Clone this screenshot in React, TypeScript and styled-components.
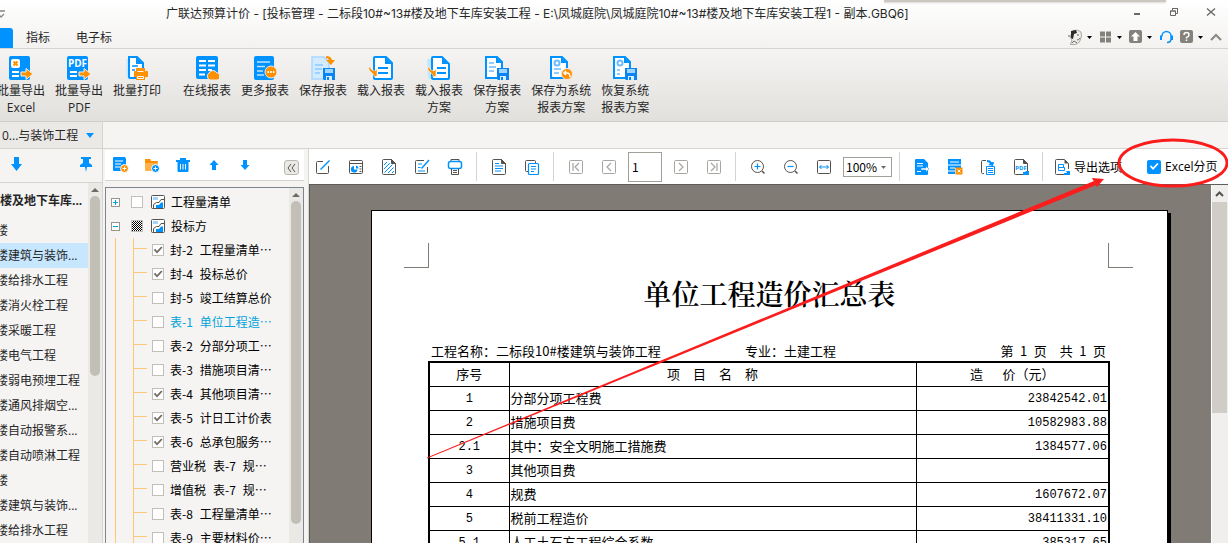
import React from 'react';
import styled, { createGlobalStyle, css } from 'styled-components';

const BLUE = '#0093ff';
const ORANGE = '#ff9000';
const INK = '#55524e';
const MUTED = '#a8a6a1';
const LINE = '#d6d4ce';
const PANEL = '#f5f4f3';

const UI_FONT = '"Open Sans", "Noto Sans CJK SC", sans-serif';
const CJK_FONT = '"Noto Sans CJK SC", sans-serif';

const GlobalStyle = createGlobalStyle`
  *, *::before, *::after { box-sizing: border-box; }
  body { margin: 0; background: ${PANEL}; overflow: hidden; }
  button, input, select { font: inherit; color: inherit; margin: 0; }
  button { background: none; border: 0; padding: 0; cursor: pointer; }
`;

const Window = styled.div`
  position: relative;
  display: flex;
  flex-direction: column;
  height: 100vh;
  overflow: hidden;
  font: 12px/17px ${UI_FONT};
  color: #262626;
`;

/* ---------- title bar and menu tabs ---------- */

const Chrome = styled.header`
  position: relative;
  background: linear-gradient(#ffffff, #f3f2f0);
  border-bottom: 1px solid ${LINE};
`;

const TopShade = styled.div`
  position: absolute;
  top: 0;
  left: 884px;
  right: 62px;
  height: 2px;
  background: #c9c7bf;
  box-shadow: 0 1px 2px #d8d6d0;
`;

const TitleBar = styled.div`
  display: flex;
  align-items: center;
  height: 28px;
`;

const QuickAccess = styled.button`
  display: flex;
  width: 8px;
`;

const Title = styled.h1`
  flex: 1;
  margin: 0 0 0 158px;
  font: 400 12px/26px Inter, ${CJK_FONT};
  white-space: nowrap;
`;

const WindowButtons = styled.div`
  display: flex;
  gap: 25px;
  padding: 0 11px 4px 0;
`;

const GlyphButton = styled.button`
  display: flex;
  align-items: center;
  justify-content: center;
`;

const TabBar = styled.div`
  display: flex;
  align-items: stretch;
  height: 20px;
`;

const ActiveTab = styled.button`
  width: 13px;
  background: ${BLUE};
  border-radius: 0 3px 0 0;
`;

const MenuTab = styled.button`
  padding: 0 13px;
  line-height: 20px;
`;

const Tray = styled.div`
  display: flex;
  align-items: center;
  gap: 7px;
  margin-left: auto;
  padding: 0 6px 2px 0;
`;

const TrayButton = styled.button`
  display: flex;
  align-items: center;
  gap: 4px;
`;

/* ---------- ribbon ---------- */

const Ribbon = styled.div`
  display: flex;
  gap: 12px;
  height: 73px;
  background: linear-gradient(#f5f4f3, #e1e0dc);
  border-bottom: 1px solid #cfcdc8;
`;

const RibbonGroup = styled.div`
  display: flex;
  &:first-child { margin-left: -8px; }
`;

const RibbonButton = styled.button`
  display: flex;
  flex-direction: column;
  align-items: center;
  padding: 7px 5px 0;
  line-height: 17px;
  white-space: pre;
  text-align: center;
  svg { margin-bottom: 2px; flex: none; }
`;

const ProjectStrip = styled.div`
  display: flex;
  height: 27px;
  border-bottom: 1px solid ${LINE};
`;

const ProjectTab = styled.button`
  display: flex;
  align-items: center;
  gap: 8px;
  width: 103px;
  padding-left: 2px;
  background: #ebe9e6;
  border-right: 1px solid ${LINE};
`;

/* ---------- panes ---------- */

const Body = styled.main`
  display: flex;
  flex: 1;
  min-height: 0;
`;

const ProjectPane = styled.section`
  display: flex;
  flex-direction: column;
  flex: none;
  width: 103px;
  border-right: 1px solid ${LINE};
`;

const ProjectTools = styled.div`
  display: flex;
  justify-content: space-between;
  align-items: center;
  height: 34px;
  padding: 0 8px 4px 9px;
  border-bottom: 1px solid ${LINE};
`;

const Scroller = styled.div`
  display: flex;
  flex: 1;
  min-height: 0;
`;

const ProjectList = styled.ul`
  flex: 1;
  min-width: 0;
  margin: 0;
  padding: 0;
  list-style: none;
  overflow: hidden;
`;

const ProjectItem = styled.li<{ $selected?: boolean; $root?: boolean }>`
  height: ${p => (p.$root ? 35 : 25)}px;
  line-height: ${p => (p.$root ? 35 : 25)}px;
  font-weight: ${p => (p.$root ? 700 : 400)};
  text-indent: ${p => (p.$root ? 0 : -4)}px;
  background: ${p => (p.$selected ? '#c7e7ff' : 'transparent')};
  white-space: nowrap;
`;

const ScrollTrack = styled.div`
  flex: none;
  display: flex;
  flex-direction: column;
  align-items: center;
  width: 14px;
  overflow: hidden;
  background: #ebe9e6;
`;

const ScrollArrow = styled.button`
  display: flex;
  justify-content: center;
  align-items: center;
  flex: none;
  height: 13px;
`;

const ScrollThumb = styled.div<{ $size: number }>`
  flex: none;
  width: 10px;
  height: ${p => p.$size}px;
  border-radius: 5px;
  background: #c2bfb7;
`;

const ReportPane = styled.section`
  display: flex;
  flex-direction: column;
  flex: none;
  width: 206px;
  padding: 1px 4px 0 2px;
  border-right: 1px solid ${LINE};
`;

const ReportTools = styled.div`
  display: flex;
  align-items: center;
  height: 31px;
  margin-bottom: 6px;
  padding-right: 5px;
  background: #fff;
  border-bottom: 1px solid ${LINE};
`;

const ToolButton = styled.button<{ $w: number }>`
  display: flex;
  align-items: center;
  justify-content: center;
  flex: none;
  width: ${p => p.$w}px;
  height: 28px;
`;

const CollapseButton = styled.button`
  display: flex;
  align-items: center;
  justify-content: center;
  width: 15px;
  height: 15px;
  margin: 5px 0 0 auto;
  background: #ebe9e6;
  border: 1px solid #b9b7b1;
  border-radius: 3px;
`;

const TreeBox = styled.div`
  display: flex;
  flex: 1;
  min-height: 0;
  border: 1px solid #7f848c;
  border-bottom: 0;
  background: ${PANEL};
`;

const Tree = styled.ul`
  flex: 1;
  min-width: 0;
  margin: 0;
  padding: 2px 0 0;
  list-style: none;
  overflow: hidden;
  font: 12px/24px ${CJK_FONT};
  color: #000;
`;

const TreeRow = styled.li`
  display: flex;
  align-items: center;
  height: 24px;
`;

const Expander = styled.button`
  display: flex;
  flex: none;
  margin: 0 11px 0 5px;
`;

const Trunk = styled.span`
  flex: none;
  align-self: stretch;
  width: 18px;
  margin-left: 9px;
  border-left: 1px solid #ffc878;
`;

const Branch = styled.span`
  flex: none;
  align-self: stretch;
  width: 14px;
  margin-right: 5px;
  border-left: 1px solid #ffc878;
  &::before {
    content: '';
    display: block;
    height: 11px;
    border-bottom: 1px solid #ffc878;
  }
`;

const CheckBox = styled.input.attrs({ type: 'checkbox' })<{ $mixed?: boolean; $accent?: boolean }>`
  appearance: none;
  flex: none;
  display: grid;
  place-content: center;
  width: ${p => (p.$accent ? 14 : 12)}px;
  height: ${p => (p.$accent ? 14 : 12)}px;
  background: #fff;
  border: 1px solid #c2bfb9;
  ${p => p.$mixed && css`
    background: repeating-conic-gradient(#000 0 25%, #fff 0 50%) 0 0 / 2px 2px;
  `}
  ${p => p.$accent && css`
    background: ${BLUE};
    border: 0;
    border-radius: 2px;
  `}
  &:checked::before {
    content: '';
    width: 10px;
    height: 10px;
    background: ${p => (p.$accent ? '#fff' : '#6d6a66')};
    clip-path: polygon(8% 50%, 22% 38%, 40% 60%, 82% 14%, 96% 26%, 40% 86%);
  }
`;

const TreeLabel = styled.label<{ $active?: boolean }>`
  display: flex;
  gap: 7px;
  margin-left: 6px;
  white-space: nowrap;
  color: ${p => (p.$active ? '#00a2dc' : '#000')};
`;

const FolderIcon = styled.svg`
  flex: none;
  margin-left: 8px;
`;

/* ---------- preview ---------- */

const Preview = styled.section`
  display: flex;
  flex-direction: column;
  flex: 1;
  min-width: 0;
`;

const PreviewTools = styled.div`
  display: flex;
  align-items: center;
  gap: 5px;
  flex: none;
  height: 35px;
  background: #fff;
`;

const Separator = styled.span`
  flex: none;
  width: 1px;
  height: 29px;
  margin: 0 3px 0 2px;
  background: ${LINE};
`;

const PageInput = styled.input`
  flex: none;
  width: 34px;
  height: 30px;
  padding: 0 3px;
  border: 1px solid #a3a099;
  background: #fff;
  font-family: ${CJK_FONT};
  color: #000;
`;

const ZoomField = styled.label`
  position: relative;
  display: flex;
  flex: none;
  svg { position: absolute; right: 6px; top: 9px; pointer-events: none; }
`;

const ZoomSelect = styled.select`
  appearance: none;
  width: 49px;
  height: 20px;
  padding: 0 2px;
  border: 1px solid #a3a099;
  border-radius: 0;
  background: #fff;
  font-family: ${CJK_FONT};
  color: #000;
`;

const ExportOptions = styled.button`
  display: flex;
  align-items: center;
  gap: 4px;
  flex: none;
  padding-left: 3px;
  font-family: ${CJK_FONT};
  white-space: nowrap;
  color: #000;
`;

const PagingOption = styled.label`
  display: flex;
  align-items: center;
  gap: 4px;
  flex: none;
  margin-left: 20px;
  white-space: nowrap;
  color: #000;
`;

const Canvas = styled.div`
  display: flex;
  flex: 1;
  min-height: 0;
  background: #807b75;
  border-top: 1px solid #5f5c58;
  border-left: 1px solid #5f5c58;
  overflow: hidden;
`;

const Paper = styled.article`
  flex: 1;
  min-width: 0;
  height: max-content;
  min-height: 640px;
  margin: 25px 43px 0 61px;
  padding-top: 32px;
  background: #fff;
  border: 1px solid #000;
  box-shadow: 3px 3px 0 #000;
  color: #000;
  font: 13px/20px ${CJK_FONT};
`;

const CropMarks = styled.div`
  display: flex;
  justify-content: space-between;
  padding: 0 34px 0 32px;
`;

const CropMark = styled.span<{ $side: 'left' | 'right' }>`
  width: 25px;
  height: 25px;
  border-bottom: 1px solid #807b75;
  border-${p => (p.$side === 'left' ? 'right' : 'left')}: 1px solid #807b75;
`;

const PaperTitle = styled.h2`
  margin: 7px 0 30px;
  font: 600 28px/36px "Noto Serif CJK SC", ${CJK_FONT};
  text-align: center;
`;

const PaperBody = styled.div`
  padding: 0 57px 0 56px;
`;

const InfoLine = styled.div`
  display: grid;
  grid-template-columns: 314px 1fr auto;
  padding: 0 4px 0 3px;
  white-space: nowrap;
`;

const CostTable = styled.table`
  width: 100%;
  table-layout: fixed;
  border-collapse: collapse;
  border: 2px solid #000;
`;

const Th = styled.th<{ $w?: number }>`
  width: ${p => (p.$w ? `${p.$w}px` : 'auto')};
  height: 24px;
  padding: 0;
  border: 1px solid #000;
  font-weight: 400;
  white-space: pre;
`;

const Td = styled.td<{ $kind: 'code' | 'name' | 'money' }>`
  height: 24px;
  padding: 0 1px;
  border: 1px solid #000;
  text-align: ${p => ({ code: 'center', name: 'left', money: 'right' })[p.$kind]};
  ${p => p.$kind !== 'name' && css`
    padding-top: 2px;
    font: 12px/20px "Liberation Mono", monospace;
  `}
`;

const PageScroll = styled.div`
  flex: none;
  width: 17px;
  background: #f0efee;
  border-left: 1px solid #fff;
`;

const PageScrollUp = styled.button`
  display: flex;
  align-items: center;
  justify-content: center;
  width: 15px;
  height: 17px;
`;

const PageScrollThumb = styled.div`
  width: 15px;
  height: 211px;
  background: #d0cdc6;
`;

const Annotation = styled.svg`
  position: absolute;
  top: 0;
  left: 0;
  pointer-events: none;
`;

/* ---------- icons ---------- */

type IconProps = { size?: number; children: React.ReactNode };
const Icon = ({ size = 16, children }: IconProps) => (
  <svg width={size} height={size} viewBox={`0 0 ${size} ${size}`} fill="none" aria-hidden="true">
    {children}
  </svg>
);

const DownMark = ({ color = '#000' }: { color?: string }) => (
  <svg width="5" height="3" viewBox="0 0 5 3" aria-hidden="true"><path d="M0 0h5L2.500 3z" fill={color} /></svg>
);

const Floppy = ({ x, y }: { x: number; y: number }) => (
  <g transform={`translate(${x} ${y})`}>
    <path d="M0 0h12v12H1l-1-1z" fill="#0a84f0" />
    <path d="M2 1h8v4H2z" fill="#9ed6ff" />
    <path d="M3 8h6v4H3z" fill="#d6eeff" />
    <path d="M4 9h2v3H4z" fill="#0a84f0" />
  </g>
);

const OrangeArrow = () => (
  <path d="M12 16h5v-3.500l7 5.500-7 5.500V20h-5z" fill={ORANGE} stroke="#f1f0ee" strokeWidth="1" />
);

const DocOutline = ({ x = 0 }: { x?: number }) => (
  <g transform={`translate(${x} 0)`}>
    <path d="M2 1h11l6 6v15q0 1-1 1H2q-1 0-1-1V2q0-1 1-1z" fill="#fff" stroke={BLUE} strokeWidth="2" />
    <path d="M12 1v7h7z" fill={BLUE} />
  </g>
);

const bigIcons: Record<string, React.ReactNode> = {
  excel: <>
    <rect x="0" y="0" width="21" height="24" rx="2" fill={BLUE} />
    <rect x="2" y="3" width="9" height="9" rx="2" fill="#fff" />
    <path d="M4.500 5.500l4 4m0-4l-4 4" stroke={ORANGE} strokeWidth="2" />
    <path d="M3 16h7M3 20h7" stroke="#fff" strokeWidth="2" />
    <OrangeArrow />
  </>,
  pdf: <>
    <rect x="0" y="0" width="21" height="24" rx="2" fill={BLUE} />
    <text x="10.500" y="11" fontSize="10" fontWeight="700" fill="#fff" textAnchor="middle" fontFamily="Open Sans, sans-serif">PDF</text>
    <path d="M3 16h7M3 20h7" stroke="#fff" strokeWidth="2" />
    <OrangeArrow />
  </>,
  print: <>
    <path d="M1 3h5v19H2q-1 0-1-1z" fill="#cfe9ff" />
    <path d="M4 1h8l6 6v15H5q-1 0-1-1z" fill="#fff" stroke={BLUE} strokeWidth="2" />
    <path d="M11 1v7h7z" fill={BLUE} />
    <path d="M7 10h6M7 14h3" stroke={BLUE} strokeWidth="1.500" />
    <path d="M11 12h9v3h2q1 0 1 1v5h-3v3h-9v-3H9v-5q0-1 1-1h1z" fill={ORANGE} />
    <path d="M12.500 15.500h6M12.500 20.500h6v2h-6z" stroke="#fff" fill={ORANGE} />
  </>,
  online: <>
    <rect x="1" y="0" width="22" height="23" rx="2" fill={BLUE} />
    <path d="M4 5h7M13 5h7M4 9.500h7M13 9.500h7M4 14h7M13 14h4M4 18.500h6" stroke="#fff" strokeWidth="2" />
    <path d="M15 24a4 4 0 0 1-1-7 4.500 4.500 0 0 1 8 0 3.500 3.500 0 0 1 0 7z" fill={ORANGE} stroke="#ecebe8" strokeWidth="1" />
  </>,
  more: <>
    <rect x="1" y="0" width="20" height="24" rx="2" fill={BLUE} />
    <path d="M4 6h13M4 10.500h8M4 15h6M4 19h7" stroke="#bfe3ff" strokeWidth="1.500" />
    <circle cx="18" cy="16" r="6" fill={ORANGE} stroke="#ecebe8" />
    <path d="M14.500 16h7" stroke="#fff" strokeWidth="2" strokeDasharray="1.500 1.200" />
  </>,
  save: <>
    <path d="M1 1h12l5 5v17H1z" fill="#d3ebff" stroke="#a9d8ff" strokeWidth="1.500" />
    <path d="M4 9h8M4 13h7M4 17h5" stroke="#8ccaff" strokeWidth="1.500" />
    <path d="M15 0q5 0 6 4h3l-4 5-5-5h3q-1-2-3-2z" fill={ORANGE} />
    <Floppy x={12} y={12} />
  </>,
  load: <>
    <DocOutline x={4} />
    <path d="M9 12h10M9 17h10" stroke={BLUE} strokeWidth="2" />
    <path d="M0 10v4l5 5v2l3-1v-7l-2 2-3-1z" fill={ORANGE} stroke="#fff" strokeWidth=".5" />
  </>,
  loadPlan: <>
    <path d="M0 3h6v20H1z" fill="#c3e5ff" />
    <path d="M6 1h9l7 7v14q0 1-1 1H6q-1 0-1-1V2q0-1 1-1z" fill="#fff" stroke={BLUE} strokeWidth="2" />
    <path d="M15 1v7h7z" fill={BLUE} />
    <path d="M10 12h9M10 17h9" stroke={BLUE} strokeWidth="2" />
    <path d="M1 10v4l5 5v2l3-1v-7l-2 2-3-1z" fill={ORANGE} stroke="#fff" strokeWidth=".5" />
  </>,
  savePlan: <>
    <path d="M1 1h11l5 5v16H1z" fill="#fff" stroke={BLUE} strokeWidth="2" />
    <path d="M11 1v6h6z" fill={BLUE} />
    <path d="M4 7h5M4 11h7M4 15h5" stroke="#6cbcff" strokeWidth="1.500" />
    <Floppy x={12} y={12} />
  </>,
  sysSave: <>
    <path d="M2 1h11l5 5v16H2z" fill="#fff" stroke={BLUE} strokeWidth="2" />
    <path d="M12 1v6h6z" fill={BLUE} />
    <circle cx="8" cy="7" r="2.500" stroke="#6cbcff" strokeWidth="2" />
    <path d="M5 13h7M5 17h5" stroke="#6cbcff" strokeWidth="1.500" />
    <circle cx="18" cy="18" r="5.500" fill={ORANGE} stroke="#ecebe8" />
    <path d="M21 21q0-4-3-4h-3m2-2l-2 2 2 2" stroke="#fff" strokeWidth="1.500" />
  </>,
  sysRestore: <>
    <path d="M1 1h11l5 5v16H1z" fill="#fff" stroke={BLUE} strokeWidth="2" />
    <path d="M11 1v6h6z" fill={BLUE} />
    <circle cx="7" cy="7" r="2.500" stroke="#6cbcff" strokeWidth="2" />
    <path d="M4 14h3M4 18h3" stroke="#6cbcff" strokeWidth="1.500" />
    <Floppy x={12} y={12} />
  </>,
};

const box = <path d="M2.500 1.500h11q1 0 1 1v11q0 1-1 1h-11q-1 0-1-1v-11q0-1 1-1z" stroke={MUTED} />;
const sheet = <><path d="M2.500.5h8l4 4v10q0 1-1 1h-11q-1 0-1-1v-13q0-1 1-1z" stroke={INK} /><path d="M10.500.5v4h4z" fill={INK} stroke={INK} /></>;

const icons: Record<string, React.ReactNode> = {
  addNote: <>
    <path d="M0 1q0-1 1-1h11l1 2v6l-5 6H1q-1 0-1-1z" fill={BLUE} />
    <path d="M2 4h8M2 7h6M2 10h5" stroke="#fff" />
    <circle cx="11.500" cy="11.500" r="4" fill={ORANGE} stroke="#fff" />
    <path d="M9.500 11.500h4m-2-2v4" stroke="#fff" />
  </>,
  addFolder: <>
    <path d="M1 2h5l1 2h7v10H2q-1 0-1-1z" fill="#ffb14a" />
    <path d="M1 2h5l1 2h6v2H1z" fill={ORANGE} />
    <circle cx="11.500" cy="11.500" r="4" fill={BLUE} stroke="#fff" />
    <path d="M9.500 11.500h4m-2-2v4" stroke="#fff" />
  </>,
  trash: <>
    <path d="M5 1h6v2h4v2H1V3h4z" fill={BLUE} />
    <path d="M2.500 4h11v10q0 1-1 1h-9q-1 0-1-1z" fill={BLUE} />
    <path d="M5.500 7v5.500M8 7v5.500M10.500 7v5.500" stroke="#fff" />
  </>,
  up: <path d="M8 3l4.500 5H10v5H6V8H3.500z" fill={BLUE} />,
  down: <path d="M8 13l4.500-5H10V3H6v5H3.500z" fill={BLUE} />,
  bigDown: <path d="M5 1h5v7h3l-5.500 7L2 8h3z" fill={BLUE} />,
  pin: <path d="M3 1h10v2h-2v4l3 2v2H9l-1 5-1-5H2V9l3-2V3H3z" fill={BLUE} />,
  edit: <><path d="M8 2.500H2.500q-1 0-1 1v10q0 1 1 1h10q1 0 1-1V7" stroke={INK} /><path d="M5.500 10.500l9-9" stroke={BLUE} strokeWidth="1.500" /></>,
  design: <>
    <rect x="1.500" y="1.500" width="13" height="13" rx="1" stroke={INK} />
    <path d="M1.500 4.500h13" stroke={INK} />
    <path d="M6 7a3.300 3.300 0 1 0 3.500 3.500H6z" fill={BLUE} /><path d="M8 6.500v3h2.500q0-2.500-2.500-3z" fill={BLUE} />
    <path d="M11.500 7.500h2M11.500 10h2M11.500 12.500h2" stroke={INK} />
  </>,
  hatch: <>{sheet}<path d="M3 6l3-3M3 10l6-6M3.500 13.500l8-8M7 14l5.500-5.500M11 14l2-2" stroke={BLUE} /></>,
  editDoc: <>
    <path d="M10 1.500H2.500q-1 0-1 1v11q0 1 1 1h10q1 0 1-1V8" stroke={INK} />
    <path d="M4 5h4M4 8.500h2.500M4 12h7" stroke={BLUE} /><path d="M7.500 9.500L15 1" stroke={BLUE} strokeWidth="1.500" />
  </>,
  printer: <>
    <path d="M4 2.500V.5h8v2" stroke={INK} />
    <rect x="1.500" y="2.500" width="13" height="7" rx="2" stroke={BLUE} strokeWidth="1.500" />
    <path d="M4.500 9.500v6h7v-6M6 11.500h4M6 13.500h4" stroke={INK} />
  </>,
  page: <>{sheet}<path d="M4 4.500h4M4 7h8M4 9.500h8M4 12h6" stroke={BLUE} /></>,
  copy: <>
    <path d="M5 12.500H2.500q-1 0-1-1v-9q0-1 1-1h8q1 0 1 1V4" stroke={INK} />
    <rect x="4.500" y="4.500" width="10" height="11" rx="1" stroke={BLUE} strokeWidth="1.200" fill="#fff" />
    <path d="M7 7.500h5M7 10h5M7 12.500h3" stroke={BLUE} />
  </>,
  first: <>{box}<path d="M5 4v8M11 4L7 8l4 4" stroke={MUTED} strokeWidth="1.200" /></>,
  prev: <>{box}<path d="M10 4L6 8l4 4" stroke={MUTED} strokeWidth="1.200" /></>,
  next: <>{box}<path d="M6 4l4 4-4 4" stroke={MUTED} strokeWidth="1.200" /></>,
  last: <>{box}<path d="M11 4v8M5 4l4 4-4 4" stroke={MUTED} strokeWidth="1.200" /></>,
  zoomIn: <><circle cx="7.500" cy="7.500" r="6" stroke={INK} /><path d="M12 12l2.500 2.500" stroke={INK} strokeWidth="1.500" /><path d="M4.500 7.500h6m-3-3v6" stroke={BLUE} strokeWidth="1.200" /></>,
  zoomOut: <><circle cx="7.500" cy="7.500" r="6" stroke={INK} /><path d="M12 12l2.500 2.500" stroke={INK} strokeWidth="1.500" /><path d="M4.500 7.500h6" stroke={BLUE} strokeWidth="1.200" /></>,
  fit: <><rect x="1.500" y="1.500" width="13" height="13" rx="1" stroke={INK} /><path d="M3.500 8h9M5.500 6l-2 2 2 2M10.500 6l2 2-2 2" stroke={BLUE} /></>,
  exportOne: <>
    <path d="M1 1q0-1 1-1h8l4 4v11q0 1-1 1H2q-1 0-1-1z" fill={BLUE} />
    <path d="M3 4.500h6M3 7h6M3 12.500h4" stroke="#fff" /><path d="M7 9h5V7l3 3-3 3v-2H7z" fill="#fff" stroke={BLUE} strokeWidth=".5" />
  </>,
  exportExcel: <>
    <path d="M1 0h13v9H8v6H1z" fill={BLUE} /><path d="M3 3h9M1 6h13M3 9h5M1 12h7" stroke="#fff" />
    <rect x="8.500" y="8.500" width="7" height="7" fill={ORANGE} /><path d="M10.500 10.500l3 3m0-3l-3 3" stroke="#fff" />
  </>,
  exportSheet: <>
    <path d="M6 1.500H2.500q-1 0-1 1v11q0 1 1 1H4" stroke={INK} />
    <path d="M7 1q4 0 4 2h3l-1 4-5-1 2-1q-1-2-3-2z" fill={BLUE} />
    <path d="M6.500 7.500h8v8h-8z" fill="#fff" stroke={BLUE} /><path d="M8 9.500h5M8 11.500h5M8 13.500h5" stroke={BLUE} />
  </>,
  exportPdf: <>
    {sheet}
    <rect x="2" y="5" width="12" height="6" fill="#fff" />
    <text x="8" y="10.500" fontSize="6" fontWeight="700" fill={BLUE} textAnchor="middle" fontFamily="Open Sans, sans-serif">PDF</text>
    <path d="M10 16v-3h3l-1-1h4v4z" fill={BLUE} />
  </>,
  options: <>
    <path d="M10 15.500H2.500q-1 0-1-1v-13q0-1 1-1h8l4 4V10" stroke={INK} /><path d="M10.500.5v4h4z" fill={INK} />
    <path d="M4.500 5.500h5v3h-5zM4.500 8.500h6v3h-6z" stroke={BLUE} /><path d="M10 16v-2h3l-1-2h4v4z" fill={BLUE} />
  </>,
};

/* ---------- data ---------- */

const ribbonGroups = [
  [['excel', '批量导出\nExcel'], ['pdf', '批量导出\nPDF'], ['print', '批量打印']],
  [
    ['online', '在线报表'], ['more', '更多报表'], ['save', '保存报表'], ['load', '载入报表'],
    ['loadPlan', '载入报表\n方案'], ['savePlan', '保存报表\n方案'],
    ['sysSave', '保存为系统\n报表方案'], ['sysRestore', '恢复系统\n报表方案'],
  ],
];

const projects = [
  '楼', '楼建筑与装饰...', '楼给排水工程', '楼消火栓工程', '楼采暖工程', '楼电气工程',
  '楼弱电预埋工程', '楼通风排烟空...', '楼自动报警系...', '楼自动喷淋工程', '楼',
  '楼建筑与装饰...', '楼给排水工程',
];

const reports: { parts: string[]; checked?: boolean; active?: boolean }[] = [
  { parts: ['封-2', '工程量清单…'], checked: true },
  { parts: ['封-4', '投标总价'], checked: true },
  { parts: ['封-5', '竣工结算总价'] },
  { parts: ['表-1', '单位工程造…'], active: true },
  { parts: ['表-2', '分部分项工…'] },
  { parts: ['表-3', '措施项目清…'] },
  { parts: ['表-4', '其他项目清…'], checked: true },
  { parts: ['表-5', '计日工计价表'], checked: true },
  { parts: ['表-6', '总承包服务…'], checked: true },
  { parts: ['营业税', '表-7', '规…'] },
  { parts: ['增值税', '表-7', '规…'] },
  { parts: ['表-8', '工程量清单…'] },
  { parts: ['表-9', '主要材料价…'] },
];

const costs = [
  ['1', '分部分项工程费', '23842542.01'],
  ['2', '措施项目费', '10582983.88'],
  ['2.1', '其中：安全文明施工措施费', '1384577.06'],
  ['3', '其他项目费', ''],
  ['4', '规费', '1607672.07'],
  ['5', '税前工程造价', '38411331.10'],
  ['5.1', '人工土石方工程综合系数', '385317.65'],
];

type Tool = [name: string, label: string];
const Tools = ({ items }: { items: Tool[] }) => (
  <>
    {items.map(([name, label]) => (
      <ToolButton key={name} $w={28} aria-label={label}><Icon>{icons[name]}</Icon></ToolButton>
    ))}
  </>
);

const SideScroll = ({ size }: { size: number }) => (
  <ScrollTrack>
    <ScrollArrow aria-label="向上滚动">
      <svg width="8" height="4" viewBox="0 0 8 4"><path d="M0 4h8L4 0z" fill="#6f6c68" /></svg>
    </ScrollArrow>
    <ScrollThumb $size={size} />
  </ScrollTrack>
);

const ParentRow = ({ label, open }: { label: string; open?: boolean }) => (
  <TreeRow>
    <Expander aria-label={label} aria-expanded={!!open}>
      <svg width="9" height="9" viewBox="0 0 9 9" fill="none">
        <rect x=".5" y=".5" width="8" height="8" fill="#fff" stroke="#98958f" />
        <path d={open ? 'M2 4.500h5' : 'M2 4.500h5M4.500 2v5'} stroke="#00a2dc" />
      </svg>
    </Expander>
    <CheckBox id={label} $mixed={open} />
    <FolderIcon width="14" height="14" viewBox="0 0 14 14" fill="none">
      <path d="M1.500.5h11q1 0 1 1v11q0 1-1 1h-11q-1 0-1-1v-11q0-1 1-1z" fill="#fff" stroke={INK} />
      <path d="M2 2h5v3H2z" fill="#9ed6ff" />
      <path d="M2.500 13V9.500l3-2H8l2-3h3.500" stroke={INK} />
      <path d="M5 13v-3h3l2-2.500h2V13z" fill={BLUE} />
    </FolderIcon>
    <TreeLabel htmlFor={label}>{label}</TreeLabel>
  </TreeRow>
);

export default function App() {
  return (
    <Window>
      <GlobalStyle />
      <Chrome>
        <TopShade />
        <TitleBar>
          <QuickAccess aria-label="快速访问">
            <svg width="6" height="8" viewBox="0 0 6 8" fill="none">
              <path d="M0 1h5M-2 4l3 3 3-3" stroke="#8a8782" strokeWidth="1.300" />
            </svg>
          </QuickAccess>
          <Title>广联达预算计价 - [投标管理 - 二标段10#~13#楼及地下车库安装工程 - E:\凤城庭院\凤城庭院10#~13#楼及地下车库安装工程1 - 副本.GBQ6]</Title>
          <WindowButtons>
            <GlyphButton aria-label="最小化">
              <Icon size={12}><path d="M3 8h6" stroke="#6b6863" strokeWidth="2" /></Icon>
            </GlyphButton>
            <GlyphButton aria-label="还原">
              <Icon size={12}><path d="M4.500 4V2.500h5v5H8M2.500 5h5v4.500h-5zM4 2.500h6M2 5h6" stroke="#6b6863" /></Icon>
            </GlyphButton>
            <GlyphButton aria-label="关闭">
              <Icon size={12}><path d="M2 2.500l8 7m0-7l-8 7" stroke="#6b6863" strokeWidth="1.300" /></Icon>
            </GlyphButton>
          </WindowButtons>
        </TitleBar>
        <TabBar>
          <ActiveTab aria-label="报表" />
          <MenuTab>指标</MenuTab>
          <MenuTab>电子标</MenuTab>
          <Tray>
            <TrayButton aria-label="用户">
              <svg width="16" height="16" viewBox="0 0 16 16" fill="none">
                <path d="M6 1.500q5-1.500 8 1.500l.5 4-2 6-4 2.500H3.500L5 11 3 8z" fill="#efedea" stroke="#a8a6a1" />
                <path d="M4 2l5-1 1 3-3 1-1 5-2-1z" fill="#2b2a28" />
                <path d="M1 7h2M10 6h2M13 9q-1 2-3 2M5 14l2-2 3 2" stroke="#6b6863" />
              </svg>
              <DownMark />
            </TrayButton>
            <TrayButton aria-label="布局">
              <Icon size={14}><path d="M1 1.500h5v5H1zM7 1.500h5v5H7zM1 7.500h5v5H1zM7 7.500h5v5H7z" fill="#85817b" /></Icon>
              <DownMark />
            </TrayButton>
            <TrayButton aria-label="升级">
              <Icon size={14}><rect width="13" height="13" rx="2" fill="#85817b" /><path d="M6.500 2L11 6.500H8.500V11h-4V6.500H2z" fill="#fff" /></Icon>
              <DownMark />
            </TrayButton>
            <TrayButton aria-label="客服">
              <Icon size={14}>
                <path d="M3 6.500V6a4.500 4.500 0 0 1 9 0v3q0 3.500-4 3.500" stroke={BLUE} strokeWidth="1.500" />
                <path d="M2 5.500V10M13 5.500V10" stroke={BLUE} strokeWidth="2" />
              </Icon>
            </TrayButton>
            <TrayButton aria-label="帮助">
              <Icon size={14}>
                <rect width="13" height="13" rx="2" fill="#85817b" />
                <path d="M4 5q0-2.500 2.500-2.500T9 5Q9 6.500 6.500 7.500v1M6.500 9.500V11" stroke="#fff" strokeWidth="1.500" />
              </Icon>
              <DownMark />
            </TrayButton>
            <TrayButton aria-label="折叠功能区">
              <svg width="12" height="8" viewBox="0 0 12 8" fill="none"><path d="M1 7l5-5 5 5" stroke="#8a8782" strokeWidth="2" /></svg>
            </TrayButton>
          </Tray>
        </TabBar>
      </Chrome>

      <Ribbon>
        {ribbonGroups.map((group, i) => (
          <RibbonGroup key={i}>
            {group.map(([name, label]) => (
              <RibbonButton key={name}><Icon size={24}>{bigIcons[name]}</Icon>{label}</RibbonButton>
            ))}
          </RibbonGroup>
        ))}
      </Ribbon>

      <ProjectStrip>
        <ProjectTab>
          0...与装饰工程
          <svg width="8" height="5" viewBox="0 0 8 5"><path d="M0 0h8L4 5z" fill={BLUE} /></svg>
        </ProjectTab>
      </ProjectStrip>

      <Body>
        <ProjectPane>
          <ProjectTools>
            <GlyphButton aria-label="下移"><Icon>{icons.bigDown}</Icon></GlyphButton>
            <GlyphButton aria-label="固定"><Icon>{icons.pin}</Icon></GlyphButton>
          </ProjectTools>
          <Scroller>
            <ProjectList>
              <ProjectItem $root>楼及地下车库...</ProjectItem>
              {projects.map((name, i) => (
                <ProjectItem key={i} $selected={i === 1}>{name}</ProjectItem>
              ))}
            </ProjectList>
            <SideScroll size={180} />
          </Scroller>
        </ProjectPane>

        <ReportPane>
          <ReportTools>
            {[['addNote', '新建报表'], ['addFolder', '新建文件夹'], ['trash', '删除'], ['up', '上移'], ['down', '下移']].map(([name, label]) => (
              <ToolButton key={name} $w={31} aria-label={label}><Icon>{icons[name]}</Icon></ToolButton>
            ))}
            <CollapseButton aria-label="收起">
              <svg width="9" height="8" viewBox="0 0 9 8" fill="none"><path d="M4 0L1 4l3 4M8 0L5 4l3 4" stroke="#55524e" /></svg>
            </CollapseButton>
          </ReportTools>
          <TreeBox>
            <Tree>
              <ParentRow label="工程量清单" />
              <ParentRow label="投标方" open />
              {reports.map((r, i) => (
                <TreeRow key={i}>
                  <Trunk />
                  <Branch />
                  <CheckBox id={`report-${i}`} defaultChecked={r.checked} />
                  <TreeLabel htmlFor={`report-${i}`} $active={r.active}>
                    {r.parts.map(part => <span key={part}>{part}</span>)}
                  </TreeLabel>
                </TreeRow>
              ))}
            </Tree>
            <SideScroll size={323} />
          </TreeBox>
        </ReportPane>

        <Preview>
          <PreviewTools>
            <Tools items={[['edit', '编辑'], ['design', '设计'], ['hatch', '背景'], ['editDoc', '批注'], ['printer', '打印']]} />
            <Separator />
            <Tools items={[['page', '单页'], ['copy', '复制']]} />
            <Separator />
            <Tools items={[['first', '首页'], ['prev', '上一页']]} />
            <PageInput aria-label="页码" defaultValue="1" />
            <Tools items={[['next', '下一页'], ['last', '末页']]} />
            <Separator />
            <Tools items={[['zoomIn', '放大'], ['zoomOut', '缩小'], ['fit', '适合宽度']]} />
            <ZoomField>
              <ZoomSelect aria-label="缩放比例"><option>100%</option></ZoomSelect>
              <DownMark color="#6f6c68" />
            </ZoomField>
            <Separator />
            <Tools items={[['exportOne', '导出'], ['exportExcel', '导出 Excel'], ['exportSheet', '导出表格'], ['exportPdf', '导出 PDF']]} />
            <Separator />
            <ExportOptions><Icon>{icons.options}</Icon>导出选项</ExportOptions>
            <PagingOption><CheckBox $accent defaultChecked />Excel分页</PagingOption>
          </PreviewTools>
          <Canvas>
            <Paper>
              <CropMarks><CropMark $side="left" /><CropMark $side="right" /></CropMarks>
              <PaperTitle>单位工程造价汇总表</PaperTitle>
              <PaperBody>
                <InfoLine>
                  <span>工程名称：二标段10#楼建筑与装饰工程</span>
                  <span>专业：土建工程</span>
                  <span>第&ensp;1&ensp;页&ensp;&ensp;共&ensp;1&ensp;页</span>
                </InfoLine>
                <CostTable>
                  <thead>
                    <tr>
                      <Th $w={80}>序号</Th>
                      <Th>项&emsp;目&emsp;名&emsp;称</Th>
                      <Th $w={193}>造&emsp;&ensp;价（元）</Th>
                    </tr>
                  </thead>
                  <tbody>
                    {costs.map(([code, name, money]) => (
                      <tr key={code}>
                        <Td $kind="code">{code}</Td>
                        <Td $kind="name">{name}</Td>
                        <Td $kind="money">{money}</Td>
                      </tr>
                    ))}
                  </tbody>
                </CostTable>
              </PaperBody>
            </Paper>
            <PageScroll>
              <PageScrollUp aria-label="向上滚动">
                <svg width="9" height="6" viewBox="0 0 9 6" fill="none"><path d="M1 5l3.500-3.500L8 5" stroke="#55524e" strokeWidth="2" /></svg>
              </PageScrollUp>
              <PageScrollThumb />
            </PageScroll>
          </Canvas>
        </Preview>
      </Body>

      <Annotation width="1228" height="543" viewBox="0 0 1228 543" fill="none" aria-hidden="true">
        <path d="M427 457.500L1094 181l2 4L427 458.500z" fill="#fb1c1c" />
        <path d="M1092 178l12 1-7 8z" fill="#fb1c1c" />
        <ellipse cx="1173" cy="163" rx="54" ry="23" stroke="#fb1c1c" strokeWidth="3" />
      </Annotation>
    </Window>
  );
}
